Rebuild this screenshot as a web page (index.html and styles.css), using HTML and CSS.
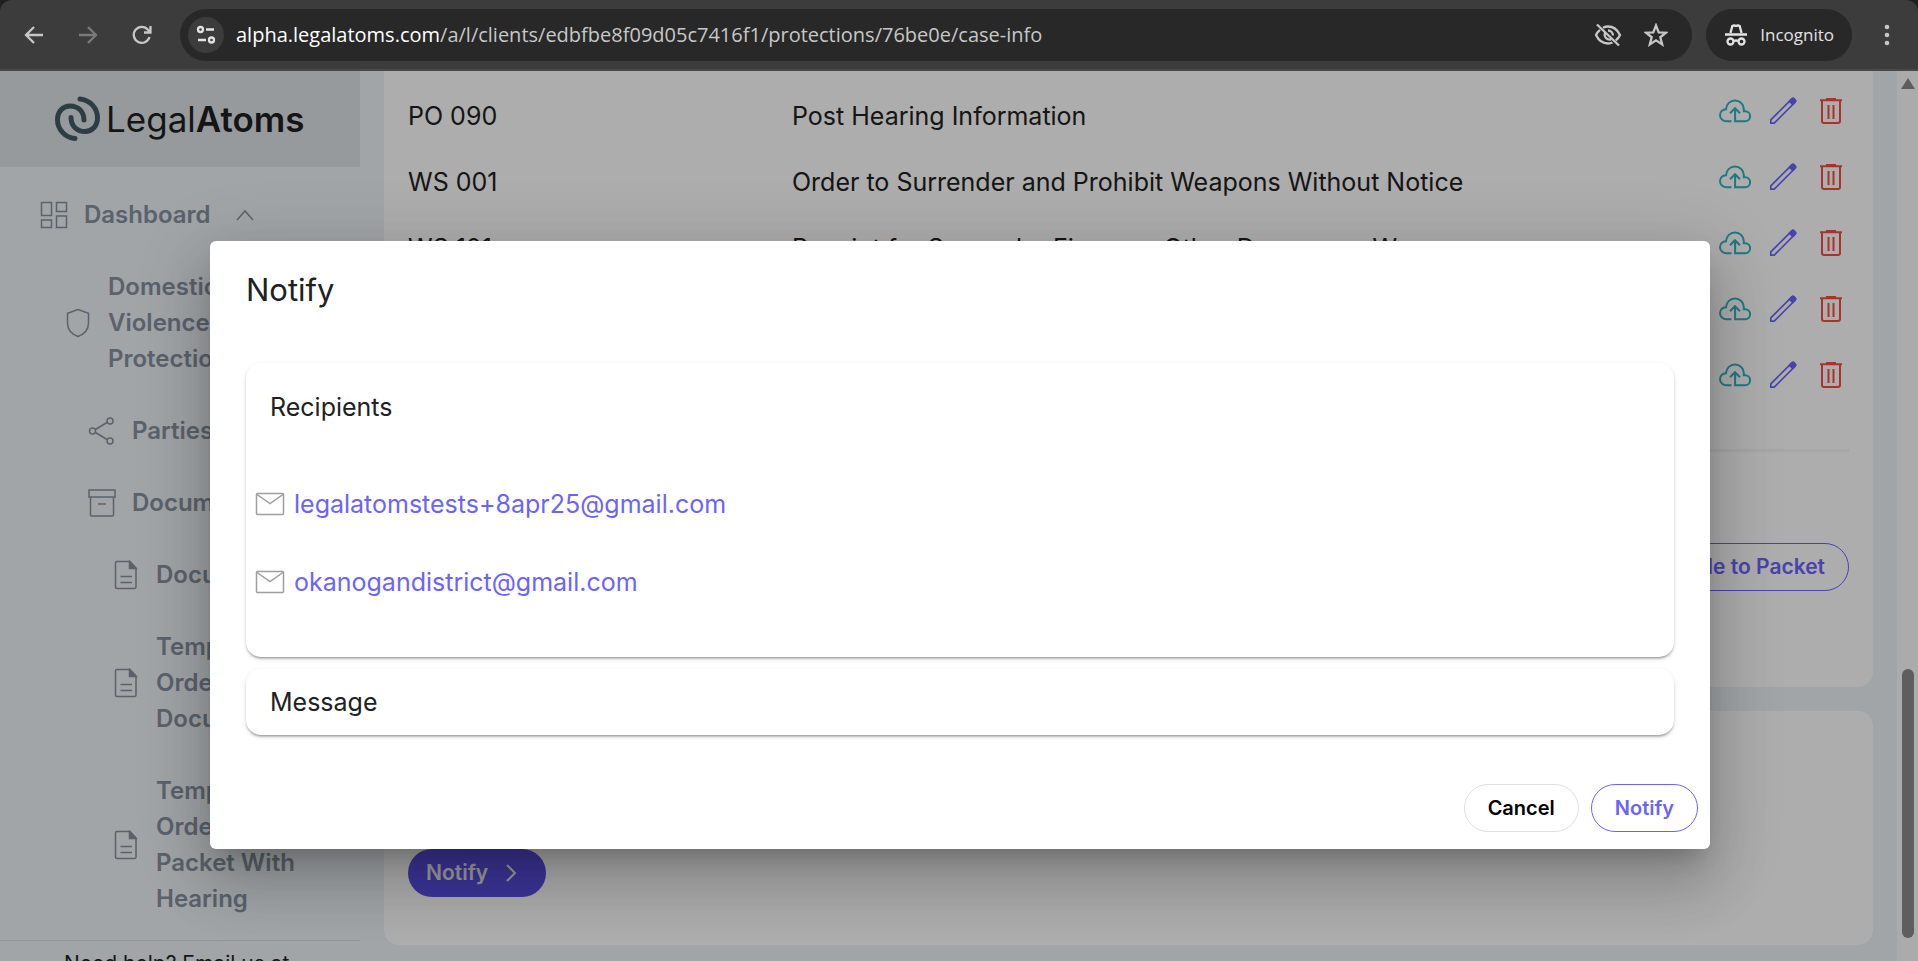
FILE: index.html
```html
<!DOCTYPE html>
<html lang="en">
<head>
<meta charset="utf-8">
<title>LegalAtoms - Case info</title>
<link rel="stylesheet" href="styles.css">
</head>
<body>
<svg class="defs" aria-hidden="true">
  <symbol id="i-cloud" viewBox="0 0 32 24"><path d="M12.500 22.300H7.500C4 22.300 1 19.600 1 16.200c0-3.300 2.600-5.800 6-6C7.400 5 11.200 1.500 16 1.500s8.800 3.700 8.800 8.600v2.100h1.300c2.800 0 5 2.200 5 5s-2.200 5.100-5 5.100h-10V9.500M11 14.200l5-5 5 5"/></symbol>
  <symbol id="i-pencil" viewBox="0 0 28 28"><path d="M1.800 26.200v-3.400L22.500 2.300l3.200 3.200L5.200 26.200z"/><path class="solid" d="M20.500 4.200l2.500-2.500q1-1 2 0l1.300 1.300q1 1 0 2l-2.500 2.500z"/></symbol>
  <symbol id="i-trash" viewBox="0 0 24 28"><path d="M1 3.200h22M7 2h10M3 3.500V24q0 2 2 2h14q2 0 2-2V3.500M9.500 8v14M14.500 8v14"/></symbol>
  <symbol id="i-file" viewBox="0 0 24 30"><path d="M3 1.500h13l6 6.500V27q0 1.500-1.500 1.500h-17Q1.500 28.500 1.500 27V3Q1.500 1.500 3 1.500zM6.500 16.500H18M6.500 22.500H18"/><path class="solid" d="M15.500 1.500V8.500H22z"/></symbol>
  <symbol id="i-mail" viewBox="0 0 30 24"><rect x="1.500" y="1.500" width="27" height="21" rx="1"/><path d="M2 2.500l13 9 13-9"/></symbol>
</svg>

<header class="browser">
  <div class="toolbar">
    <button class="tool" aria-label="Back"><svg width="20" height="20" viewBox="0 0 20 20"><path d="M19 10H2M10 2L2 10l8 8"/></svg></button>
    <button class="tool dim" aria-label="Forward"><svg width="20" height="20" viewBox="0 0 20 20"><path d="M1 10h17M10 2l8 8-8 8"/></svg></button>
    <button class="tool" aria-label="Reload"><svg width="20" height="20" viewBox="0 0 20 20"><path d="M17.500 12A8 8 0 1 1 16 4.800L18.500 7.500M18.500 1v6.500H12"/></svg></button>
    <div class="address">
      <button class="site" aria-label="Site information"><svg width="20" height="20" viewBox="0 0 20 20"><circle cx="4.500" cy="4.500" r="2.500"/><path d="M10 4.500h8M2 15h8"/><circle cx="15.500" cy="15" r="2.500"/></svg></button>
      <span class="url"><b>alpha.legalatoms.com</b>/a/l/clients/edbfbe8f09d05c7416f1/protections/76be0e/case-info</span>
      <button class="tool" aria-label="Tracking protection"><svg width="28" height="24" viewBox="0 0 28 24"><path d="M9 4.800Q11.500 3.500 14 3.500c5.500 0 9.500 3.300 12 8.500-1 2.200-2.500 4-4.200 5.400M18.500 19.500Q16.500 20.500 14 20.500C8.500 20.500 4.500 17.200 2 12c1-2.200 2.300-3.800 4-5.200M3 1.500l22 21M11 10a5 5 0 0 0 6 6.500M14 7.500a5 5 0 0 1 5 5"/></svg></button>
      <button class="tool" aria-label="Bookmark"><svg width="24" height="24" viewBox="0 0 24 24"><path d="M12 2.500l2.700 6.800 7.300.4-5.700 4.600 1.900 7.100-6.200-4-6.200 4 1.900-7.100L2 9.700l7.300-.4z"/></svg></button>
    </div>
    <button class="incognito"><svg width="24" height="24" viewBox="0 0 24 24"><path d="M6.500 10l1.800-7Q10 2 12 3q2-1 3.700 0l1.800 7"/><path d="M1 11.500h22M10 18q2-1 4 0"/><circle cx="6.500" cy="18.500" r="3"/><circle cx="17.500" cy="18.500" r="3"/></svg>Incognito</button>
    <button class="tool" aria-label="Menu"><svg class="dots" width="20" height="24" viewBox="0 0 20 24"><circle cx="10" cy="4" r="2.300"/><circle cx="10" cy="12" r="2.300"/><circle cx="10" cy="20" r="2.300"/></svg></button>
  </div>
</header>

<div class="viewport">
  <div class="page">
    <aside class="sidebar">
      <div class="brand">
        <svg width="46" height="46" viewBox="0 0 46 46"><path d="M26 3C36 4 43.500 12 43.500 22C43.500 30 38 35.500 31 35.500C23 35.500 17 30 17 21.500M21 42.500C11 41.500 3.500 33.500 3.500 23.500C3.500 15.500 9 10 16 10C24 10 30 15.500 30 24"/></svg>
        <span>Legal<b>Atoms</b></span>
      </div>
      <nav class="menu">
        <a class="item" href="#"><svg width="28" height="28" viewBox="0 0 28 28"><path d="M1.500 1.500h10v13h-10zM16.500 1.500h10v9h-10zM1.500 19h10v7.500h-10zM16.500 15h10v11.500h-10z"/></svg><span>Dashboard</span><svg class="caret" width="20" height="14" viewBox="0 0 20 14"><path d="M2 12l8-9 8 9"/></svg></a>
        <a class="item level1" href="#"><svg width="24" height="30" viewBox="0 0 24 30"><path d="M12 1.500l10.500 3.800V15c0 6-4 11-10.500 13.500C5.500 26 1.500 21 1.500 15V5.300z"/></svg><span>Domestic<br>Violence<br>Protection</span></a>
        <a class="item level2" href="#"><svg width="28" height="28" viewBox="0 0 28 28"><path d="M7.500 12.500L19 5.500M7.500 15.500L19 22.500"/><circle cx="4.500" cy="14" r="3"/><circle cx="22" cy="4" r="3"/><circle cx="22" cy="24" r="3"/></svg><span>Parties</span></a>
        <a class="item level2" href="#"><svg width="28" height="28" viewBox="0 0 28 28"><path d="M1 1h26v7H1zM2.500 8h23v18q0 1-1 1h-21q-1 0-1-1zM10 15h8"/></svg><span>Documents</span></a>
        <a class="item level3" href="#"><svg width="24" height="30"><use href="#i-file"/></svg><span>Documents</span></a>
        <a class="item level3" href="#"><svg width="24" height="30"><use href="#i-file"/></svg><span>Temporary<br>Order<br>Documents</span></a>
        <a class="item level3" href="#"><svg width="24" height="30"><use href="#i-file"/></svg><span>Temporary<br>Order<br>Packet With<br>Hearing</span></a>
      </nav>
      <div class="help">Need help? Email us at</div>
    </aside>

    <main class="content">
      <section class="card forms">
        <table>
          <tr><td class="code">PO 090</td><td>Post Hearing Information</td><td class="acts"></td></tr>
          <tr><td class="code">WS 001</td><td>Order to Surrender and Prohibit Weapons Without Notice</td><td class="acts"></td></tr>
          <tr><td class="code">WS 101</td><td>Receipt for Surrender Firearms Other Dangerous Weapons</td><td class="acts"></td></tr>
          <tr><td class="code"></td><td></td><td class="acts"></td></tr>
          <tr><td class="code"></td><td></td><td class="acts"></td></tr>
        </table>
        <hr>
        <div class="packet"><button class="pill outline">Add File to Packet</button></div>
      </section>
      <section class="card notify">
        <button class="pill filled">Notify<svg width="12" height="18" viewBox="0 0 12 18"><path d="M2 1l8 8-8 8"/></svg></button>
      </section>
    </main>
    <div class="scrollbar"><i class="arrow"></i><i class="thumb"></i></div>
  </div>

  <div class="backdrop">
    <div class="dialog" role="dialog" aria-modal="true" aria-labelledby="dialog-title">
      <h2 id="dialog-title">Notify</h2>
      <section class="panel recipients">
        <h3>Recipients</h3>
        <a href="mailto:legalatomstests+8apr25@gmail.com"><svg width="30" height="24"><use href="#i-mail"/></svg>legalatomstests+8apr25@gmail.com</a>
        <a href="mailto:okanogandistrict@gmail.com"><svg width="30" height="24"><use href="#i-mail"/></svg>okanogandistrict@gmail.com</a>
      </section>
      <section class="panel message"><h3>Message</h3></section>
      <footer>
        <button class="pill plain">Cancel</button>
        <button class="pill outline">Notify</button>
      </footer>
    </div>
  </div>
</div>
<script src="actions.js"></script>
</body>
</html>
```

FILE: actions.js
```js
const actions = [
  ["Upload", "cloud", 32, 24],
  ["Edit", "pencil", 28, 28],
  ["Delete", "trash", 24, 28]
];
document.querySelectorAll(".acts").forEach(cell => {
  cell.innerHTML = "<div>" + actions.map(([label, icon, w, h]) =>
    `<button class="${icon}" aria-label="${label}"><svg width="${w}" height="${h}"><use href="#i-${icon}"/></svg></button>`
  ).join("") + "</div>";
});
```

FILE: styles.css
```css
* { box-sizing: border-box; }
body {
  margin: 0;
  height: 100vh;
  display: flex;
  flex-direction: column;
  overflow: hidden;
  background: #202020;
  font: 24px/36px Inter, "Liberation Sans", sans-serif;
  font-optical-sizing: none;
  color: #212121;
}
button { font: inherit; color: inherit; border: 0; background: none; padding: 0; }
a { text-decoration: none; color: inherit; }
svg { fill: none; stroke: currentColor; stroke-width: 1.500; flex: none; display: block; }
.solid { fill: currentColor; }
.defs { position: absolute; width: 0; height: 0; }

/* Browser bar */
.toolbar {
  height: 71px;
  display: flex;
  align-items: center;
  padding: 0 21px 0 24px;
  background: #3c3c3c;
  border-bottom: 2px solid #4a4747;
  border-radius: 12px 12px 0 0;
  color: #c7c7c7;
  font: 20px/28px "Open Sans", "Noto Sans", sans-serif;
}
.toolbar svg { stroke-width: 2.300; }
.toolbar .dots { fill: currentColor; stroke: none; }
.tool { margin-right: 34px; }
.tool.dim { color: #7a7a7a; }
.address {
  flex: 1;
  height: 52px;
  display: flex;
  align-items: center;
  padding: 0 24px 0 8px;
  margin: 0 14px 0 -6px;
  border-radius: 26px;
  background: #282828;
}
.address .tool { margin: 0 0 0 22px; }
.site {
  width: 36px;
  height: 36px;
  border-radius: 50%;
  display: grid;
  place-items: center;
  background: #3c3c3c;
  color: #e3e3e3;
}
.url { flex: 1; margin-left: 12px; white-space: nowrap; color: #c7c7c7; }
.url b { font-weight: 400; color: #fff; }
.incognito {
  height: 52px;
  display: flex;
  align-items: center;
  gap: 12px;
  padding: 0 18px;
  margin-right: 25px;
  border-radius: 26px;
  background: #282828;
  color: #e3e3e3;
  font-size: 17px;
}
.incognito + .tool { margin: 0; }

/* Page */
.viewport { flex: 1; min-height: 0; position: relative; overflow: hidden; }
.page { height: 100%; display: flex; overflow: hidden; background: #edf3f7; }
.sidebar { width: 360px; flex: none; color: #86919f; font-weight: 600; }
.brand {
  height: 96px;
  display: flex;
  align-items: center;
  gap: 6px;
  padding-left: 54px;
  background: #dee4e8;
  color: #1f1f1f;
  font-size: 35px;
  font-weight: 400;
  font-optical-sizing: auto;
}
.brand svg { color: #455a64; stroke-width: 5; stroke-linecap: round; }
.brand b { font-weight: 600; }
.menu { padding: 12px 0 5px; }
.item { display: flex; align-items: center; gap: 16px; padding: 18px 0 18px 40px; white-space: nowrap; }
.item .caret { margin-left: 8px; }
.level1 { gap: 18px; padding-left: 66px; }
.level2 { padding-left: 88px; }
.level3 { gap: 18px; padding-left: 114px; }
.help {
  border-top: 1px solid #d5dde3;
  padding: 9px 0 0 64px;
  color: #1f1f1f;
  font-size: 21px;
  line-height: 28px;
  font-weight: 400;
  white-space: nowrap;
}
.content { flex: 1; padding: 0 24px; }
.card { background: #fff; border-radius: 15px; padding: 0 24px; }
.forms { border-radius: 0 0 15px 15px; padding: 11px 24px 96px; }
table { width: 100%; border-collapse: collapse; font-size: 25px; }
tr { height: 66px; }
td { padding: 1px 0 0; }
.code { width: 384px; }
.acts { width: 132px; padding: 0; }
.acts div { display: flex; align-items: center; gap: 18px; padding: 0 0 8px 2px; }
.acts .trash { margin-left: 4px; }
.cloud { color: #2eb3bd; }
.pencil { color: #6c63ff; }
.trash { color: #f44d43; }
.acts svg { stroke-width: 2; }
.acts .pencil svg { stroke-width: 1.700; }
hr { height: 3px; border: 0; margin: 37px 0 91px; background: #f5f5f5; }
.packet { display: flex; justify-content: flex-end; }
.pill {
  height: 48px;
  padding: 0 23px;
  border: 1px solid currentColor;
  border-radius: 24px;
  font-size: 21px;
  font-weight: 600;
  font-optical-sizing: auto;
}
.outline { color: #6c63ff; }
.plain { color: #000; border-color: #e0e0e0; }
.filled {
  display: flex;
  align-items: center;
  gap: 17px;
  padding: 0 29px 0 18px;
  border: 0;
  background: #5a4fe0;
  color: #e8e8e8;
}
.filled svg { stroke-width: 2; }
.notify { margin-top: 24px; padding: 138px 24px 48px; }
.scrollbar { width: 21px; background: #fcfcfc; display: flex; flex-direction: column; align-items: center; justify-content: space-between; padding: 7px 0 23px; }
.arrow { border: 7px solid transparent; border-top: 0; border-bottom: 11px solid #8b8b8b; }
.thumb { width: 12px; height: 269px; border-radius: 6px; background: #8b8b8b; }

/* Dialog */
.backdrop {
  position: absolute;
  inset: 0;
  display: flex;
  justify-content: center;
  align-items: flex-start;
  padding: 170px 0 0 2px;
  background: rgba(0, 0, 0, 0.32);
}
.dialog {
  width: 1500px;
  max-width: 80%;
  border-radius: 6px;
  padding: 31px 36px 17px;
  background: #fff;
  box-shadow: 0 16px 22px -10px rgba(0, 0, 0, 0.2), 0 36px 57px 4px rgba(0, 0, 0, 0.14), 0 14px 69px 12px rgba(0, 0, 0, 0.12);
}
h2, h3 { margin: 0; font-weight: 400; }
h2 { font-size: 31px; margin-bottom: 55px; }
h3 { font-size: 25px; }
.panel {
  border-radius: 15px;
  box-shadow: 0 3px 2px -2px rgba(0, 0, 0, 0.2), 0 2px 2px 0 rgba(0, 0, 0, 0.14), 0 2px 5px 0 rgba(0, 0, 0, 0.12);
}
.recipients { padding: 26px 9px 57px; margin-bottom: 12px; }
.recipients h3 { padding-left: 15px; margin-bottom: 61px; }
.recipients a { display: flex; align-items: center; gap: 9px; color: #6c63ff; font-size: 25px; }
.recipients a + a { margin-top: 42px; }
.recipients svg { color: #9e9e9e; }
.message { padding: 15px 24px; }
footer { display: flex; justify-content: flex-end; gap: 12px; margin: 49px -24px 0 0; }
footer .pill { font-size: 20px; }
```
